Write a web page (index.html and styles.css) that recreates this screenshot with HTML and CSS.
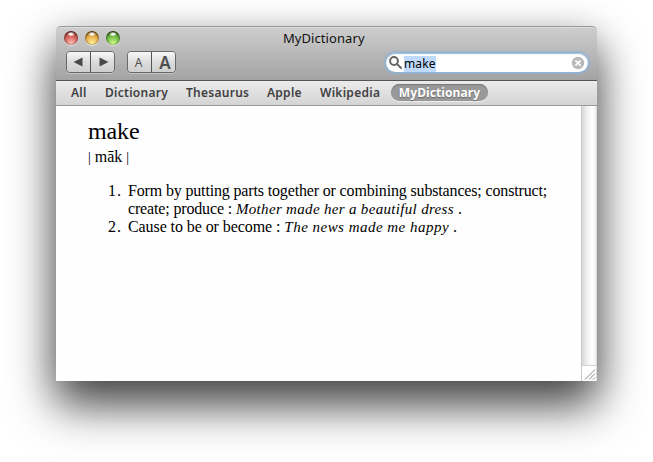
FILE: index.html
```html
<!DOCTYPE html>
<html lang="en">
<head>
<meta charset="utf-8">
<title>MyDictionary</title>
<link rel="stylesheet" href="styles.css">
</head>
<body>
<main class="window">
  <header class="toolbar">
    <div class="titlebar">
      <div class="lights"><i class="light red"></i><i class="light amber"></i><i class="light green"></i></div>
      <h1 class="title"><span>MyDictionary</span></h1>
    </div>
    <div class="controls">
      <div class="segment">
        <button aria-label="Back"><svg width="10" height="10" viewBox="0 0 10 10"><path d="M.5 5 9.5.5v9z"/></svg></button>
        <button aria-label="Forward"><svg width="10" height="10" viewBox="0 0 10 10"><path d="M9.5 5 .5.5v9z"/></svg></button>
      </div>
      <div class="segment">
        <button class="small">A</button>
        <button class="large">A</button>
      </div>
      <div class="search">
        <svg class="glass" width="13" height="13" viewBox="0 0 13 13"><circle cx="5" cy="5" r="3.9"/><path d="m8 8 4 4"/></svg>
        <span class="query">make</span>
        <svg class="clear" width="14" height="14" viewBox="0 0 14 14"><circle cx="7" cy="7" r="7"/><path d="m4.4 4.4 5.2 5.2m0-5.2L4.4 9.6"/></svg>
      </div>
    </div>
  </header>
  <nav class="tabs">
    <a class="all">All</a><a class="dictionary">Dictionary</a><a class="thesaurus">Thesaurus</a><a class="apple">Apple</a><a class="wikipedia">Wikipedia</a><a class="active">MyDictionary</a>
  </nav>
  <div class="content">
    <article class="entry">
      <h2>make</h2>
      <p class="sound"><span>|</span> māk <span>|</span></p>
      <ol>
        <li><span class="number">1.</span><div><span class="sense">Form by putting parts together or combining substances; construct;</span><br><span class="sense">create; produce :</span> <em class="mother">Mother made her a beautiful dress</em> .</div></li>
        <li><span class="number">2.</span><div><span class="sense short">Cause to be or become :</span> <em class="news">The news made me happy</em> .</div></li>
      </ol>
    </article>
    <aside class="scroll">
      <div class="track"></div>
      <svg class="grip" width="14" height="15" viewBox="0 0 14 15"><path d="M3 13.5 13 3.5M7 13.5l6-6M11 13.5l2-2"/></svg>
    </aside>
  </div>
</main>
</body>
</html>
```

FILE: styles.css
```css
* { box-sizing: border-box; }
body { margin: 0; height: 462px; padding: 26px 56px; overflow: hidden; background: #fff; }
.window {
  width: 541px; height: 355px; display: flex; flex-direction: column;
  border-radius: 5px 5px 0 0; background: #fefefe;
  box-shadow: 0 25px 46px rgba(0,0,0,.68), 0 8px 38px rgba(0,0,0,.2);
  font-family: "Noto Sans", "Open Sans", sans-serif;
}
.toolbar {
  height: 55px; padding: 0 8px 0 7px; border-radius: 5px 5px 0 0;
  background: linear-gradient(#cecece, #a3a3a3);
  border-top: 1px solid #989898; border-bottom: 1px solid #555;
  box-shadow: inset 0 1px #dedede;
}
.titlebar { height: 24px; display: grid; grid-template-columns: 58px 1fr 50px; }
.lights { display: flex; gap: 7px; padding: 4px 0 0 1px; }
.light {
  width: 14px; height: 14px; border-radius: 50%;
  box-shadow: inset 0 1px 2px #0008, inset 0 0 1px 1px #0003, 0 1px 1px #fff8;
}
.red { background: radial-gradient(ellipse 4px 2.5px at 50% 22%, #fff 30%, #fff0 100%), radial-gradient(circle at 50% 90%, #ffc4bb, #d8625c 50%, #80201d); }
.amber { background: radial-gradient(ellipse 4px 2.5px at 50% 22%, #fff 30%, #fff0 100%), radial-gradient(circle at 50% 90%, #fff6a0, #eab04b 50%, #885410); }
.green { background: radial-gradient(ellipse 4px 2.5px at 50% 22%, #fff 30%, #fff0 100%), radial-gradient(circle at 50% 90%, #d6ff8f, #74bd45 50%, #255c12); }
.title { margin: 0; padding-left: 162px; font-size: 13px; font-weight: 400; line-height: 23px; letter-spacing: .07px; color: #111; white-space: nowrap; }
.controls { display: flex; padding: 0 0 0 3px; }
.segment {
  display: grid; grid-template-columns: 23px 24px; width: 49px; height: 22px; margin-right: 9px;
  border: 1px solid #686868; border-radius: 4px; overflow: hidden; box-shadow: 0 1px #ffffff55;
}
.segment + .segment { margin-left: 3px; }
button {
  padding: 0 2px 0 0; border: 0; display: flex; align-items: center; justify-content: center;
  background: linear-gradient(#f7f7f7, #dcdcdc 50%, #cecece); color: #505050; font-family: inherit; line-height: 20px;
}
button + button { padding: 0 0 0 3px; border-left: 1px solid #555; }
button svg { fill: #494949; }
.small { font-size: 12px; padding: 1px 2px 0 0; }
.large { font-size: 17px; font-weight: 600; }
.search {
  width: 202px; height: 19px; margin: 2px 1px 0 auto; padding: 0 3px; border-radius: 10px;
  display: flex; align-items: center; background: #fff;
  box-shadow: 0 0 0 1px #8eb4d8, 0 0 2px 2px #8fb3d5aa, inset 0 1px 1px #a4b7c8;
}
.glass { fill: none; stroke: #666; stroke-width: 2; stroke-linecap: round; }
.query { position: relative; top: 1px; margin-left: 2px; height: 16px; line-height: 16px; font-size: 12px; letter-spacing: .1px; background: #bfdafc; color: #000; }
.clear { margin-left: auto; fill: #b9b9b9; stroke: #fff; stroke-width: 1.5; }
.tabs {
  height: 25px; padding: 3px 0 0 15px; display: flex; background: linear-gradient(#ebebeb, #d4d4d4);
  border-bottom: 1px solid #999; color: #414141; font-size: 12px; font-weight: 600; line-height: 17px; letter-spacing: .27px; white-space: nowrap;
}
.all { width: 34px; }
.dictionary { width: 81px; }
.thesaurus { width: 81px; }
.apple { width: 53px; }
.wikipedia { width: 71px; }
.active { width: 97px; height: 17px; text-align: center; border-radius: 9px; color: #fff; background: #999; font-weight: 700; letter-spacing: .1px; box-shadow: inset 0 1px 1px #777, 0 1px #fff8; text-shadow: 0 1px 1px #666; }
.content { flex: 1; min-height: 0; display: flex; }
.entry { width: 525px; padding: 9px 0 0 32px; font: 16px/18px "Liberation Serif", serif; color: #000; white-space: nowrap; }
h2 { margin: 0; font: 24px/32px "Liberation Serif", serif; letter-spacing: -.1px; }
.sound { margin: 0; padding-top: 1px; line-height: 18px; }
.sound span { font-size: 14px; }
ol { margin: 15px 0 0; padding: 0; list-style: none; }
li { display: grid; grid-template-columns: 20px 1fr; padding-left: 20px; }
.number { letter-spacing: 1px; }
.sense { letter-spacing: -.155px; }
.short { letter-spacing: -.08px; }
em { font-size: 15px; }
.mother { letter-spacing: .32px; }
.news { letter-spacing: .48px; }
.scroll { width: 16px; border-left: 1px solid #c9c9c9; border-right: 1px solid #ddd; }
.track { height: 260px; background: linear-gradient(90deg, #d8d8d8, #f2f2f2 40%, #fff 75%, #eee); border-bottom: 1px solid #d0d0d0; }
.grip { display: block; fill: none; stroke: #888; stroke-width: 1; }
```
